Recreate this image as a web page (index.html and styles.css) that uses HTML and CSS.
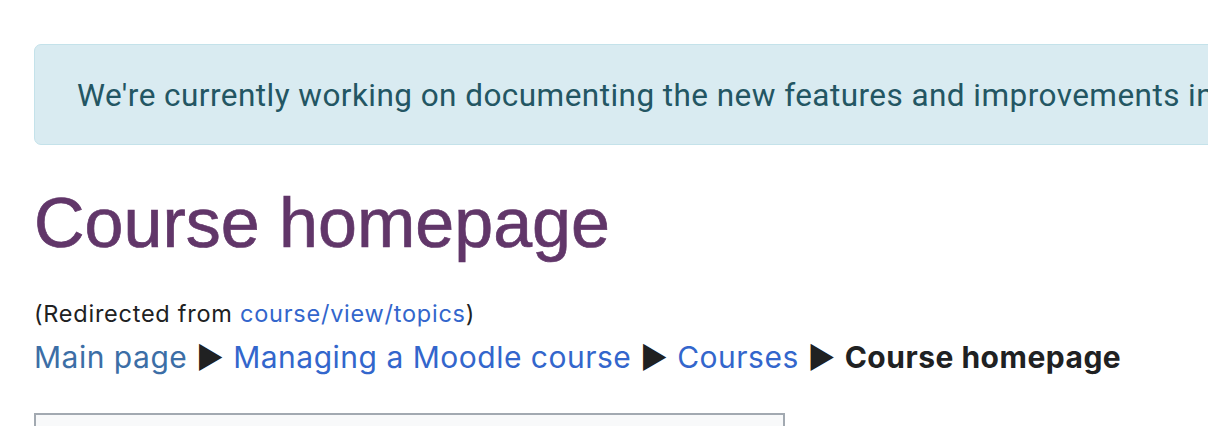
FILE: index.html
```html
<!DOCTYPE html>
<html>
<head>
<meta charset="utf-8">
<link rel="stylesheet" href="styles.css">
</head>
<body>
<div class="page">
  <div class="alert">We're currently working on documenting the new features and improvements in the latest Moodle release.</div>
  <h1 class="title">Course homepage</h1>
  <div class="redirect">(Redirected from <a href="#">course/view/topics</a>)</div>
  <div class="crumbs"><a class="main" href="#">Main page</a> ► <a href="#">Managing a Moodle course</a> ► <a href="#">Courses</a> ► <b>Course homepage</b></div>
  <div class="toc"></div>
</div>
</body>
</html>
```
FILE: styles.css
```css
html, body { margin: 0; padding: 0; background: #fff; overflow: hidden; }
body { width: 1208px; height: 426px; font-family: Inter, "Noto Sans", sans-serif; color: #202122; }
.page { padding: 44px 0 0 34px; overflow: hidden; }
.alert {
  box-sizing: border-box;
  height: 101px;
  margin-right: -200px;
  background: #d9ebf1;
  border: 1px solid #c4e2ea;
  border-radius: 7px;
  color: #235663;
  font-family: Roboto, "Noto Sans", sans-serif;
  font-size: 31.5px;
  letter-spacing: 0.45px;
  line-height: 101px;
  padding-left: 42px;
  white-space: nowrap;
  overflow: hidden;
}
.title {
  margin: 38px 0 0 0;
  font-family: "Liberation Sans", Arial, sans-serif;
  font-weight: normal;
  font-size: 70px;
  line-height: 80px;
  color: #613669;
  -webkit-text-stroke: 0.7px #613669;
}
.redirect { margin-top: 36px; font-size: 23.5px; line-height: 30px; letter-spacing: 0.75px; }
.crumbs { font-size: 30px; line-height: 40px; margin-top: 8px; letter-spacing: 0.5px; white-space: nowrap; }
a { color: #3366cc; text-decoration: none; }
a.main { color: #3c6ea6; }
.crumbs b { font-weight: 700; }
.toc {
  margin-top: 36px;
  width: 751px;
  height: 14px;
  box-sizing: border-box;
  border: 2px solid #a2a9b1;
  border-bottom: none;
  background: #f8f9fa;
}
```
